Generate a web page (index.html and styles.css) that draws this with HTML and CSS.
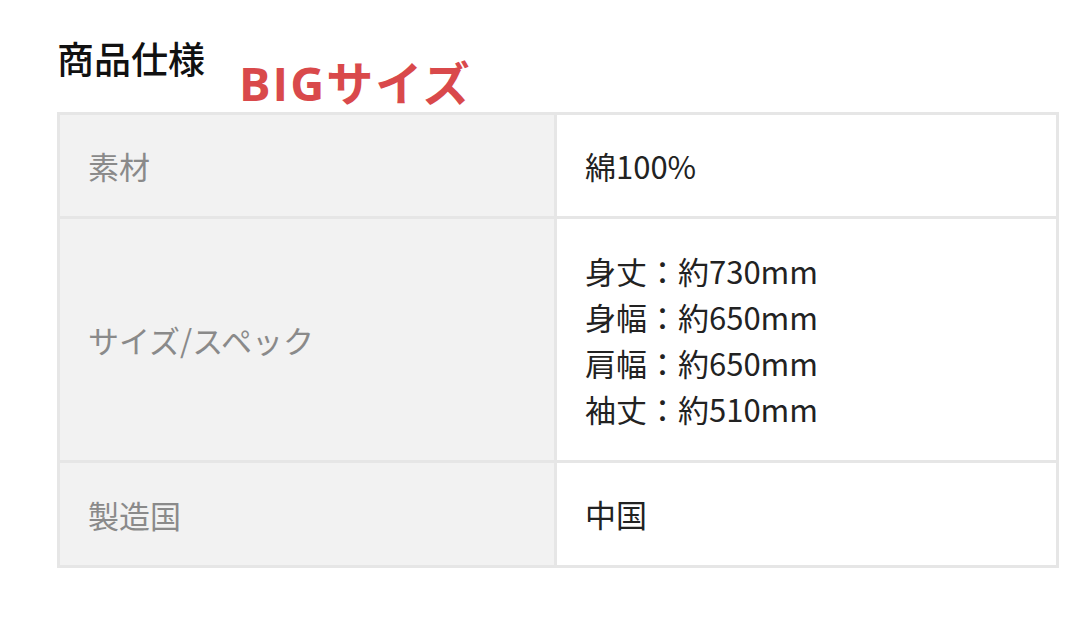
FILE: index.html
```html
<!DOCTYPE html>
<html lang="ja">
<head>
<meta charset="utf-8">
<link rel="stylesheet" href="styles.css">
</head>
<body>
<div class="page">
  <div class="head">
    <h2 class="title">商品仕様</h2>
    <span class="big">BIGサイズ</span>
  </div>
  <table class="spec">
    <tr class="r1">
      <th>素材</th>
      <td>綿100%</td>
    </tr>
    <tr class="r2">
      <th>サイズ/スペック</th>
      <td>身丈：約730mm<br>身幅：約650mm<br>肩幅：約650mm<br>袖丈：約510mm</td>
    </tr>
    <tr class="r3">
      <th>製造国</th>
      <td>中国</td>
    </tr>
  </table>
</div>
</body>
</html>
```
FILE: styles.css
```css
html, body {
  margin: 0;
  padding: 0;
  background: #fff;
}
.page {
  padding: 32px 20px 0 57px;
  font-family: "Noto Sans CJK JP", "Noto Sans", sans-serif;
}
.head {
  display: flex;
  align-items: flex-start;
  height: 80px;
}
.title {
  margin: 0;
  font-size: 37px;
  font-weight: 500;
  color: #111;
  line-height: 52px;
}
.big {
  margin-left: 34px;
  margin-top: 22px;
  font-size: 47px;
  font-weight: 700;
  color: #d9494b;
  line-height: 58px;
  letter-spacing: 2px;
  font-family: "Open Sans", "Noto Sans CJK JP", sans-serif;
}
.spec {
  width: 1002px;
  border-collapse: collapse;
  table-layout: fixed;
}
.spec th, .spec td {
  border: 3px solid #e6e6e6;
  font-size: 31px;
  text-align: left;
  vertical-align: middle;
  font-weight: 400;
  padding: 0 28px;
}
.spec th {
  width: 438px;
  background: #f2f2f2;
  color: #8a8a8a;
}
.spec td {
  color: #222;
  line-height: 46px;
}
.r1 th, .r1 td { height: 101px; }
.r2 th, .r2 td { height: 241px; }
.r3 th, .r3 td { height: 102px; }
```
